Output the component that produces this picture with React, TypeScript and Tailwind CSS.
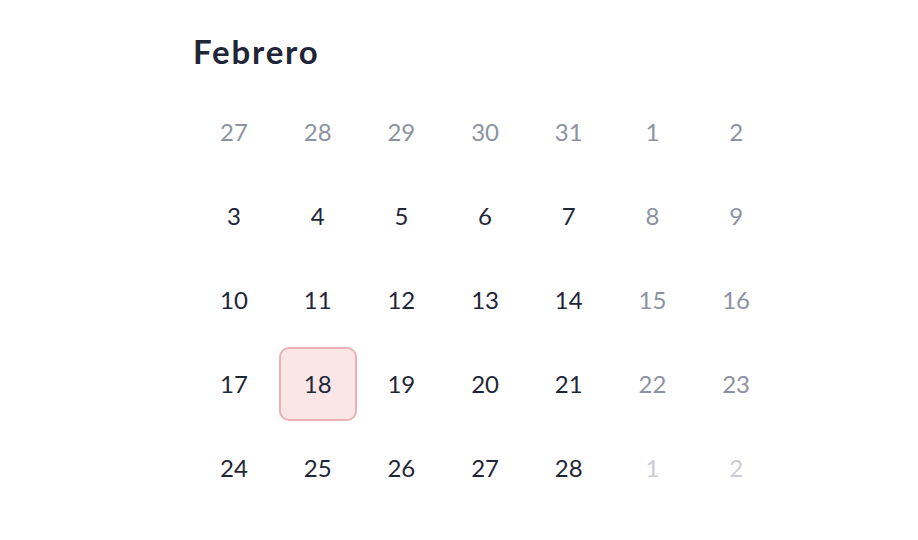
const weeks: { d: number; tone: "muted" | "main" | "faint" }[][] = [
  [27, 28, 29, 30, 31, 1, 2].map((d) => ({ d, tone: "muted" as const })),
  [3, 4, 5, 6, 7, 8, 9].map((d, i) => ({ d, tone: i > 4 ? ("muted" as const) : ("main" as const) })),
  [10, 11, 12, 13, 14, 15, 16].map((d, i) => ({ d, tone: i > 4 ? ("muted" as const) : ("main" as const) })),
  [17, 18, 19, 20, 21, 22, 23].map((d, i) => ({ d, tone: i > 4 ? ("muted" as const) : ("main" as const) })),
  [24, 25, 26, 27, 28, 1, 2].map((d, i) => ({ d, tone: i > 4 ? ("faint" as const) : ("main" as const) })),
];

const toneClass = {
  main: "text-[#1f2637]",
  muted: "text-[#8d92a0]",
  faint: "text-[#c9ccd4]",
};

export default function App() {
  return (
    <div
      className="w-[918px] h-[540px] bg-white pl-[195px] pt-[30px]"
      style={{ fontFamily: "Lato, 'Noto Sans', sans-serif" }}
    >
      {/* Month title */}
      <h2 className="text-[33px] font-bold text-[#1f2637] leading-[42px] -ml-[2px] tracking-[0.055em]">
        Febrero
      </h2>

      {/* Days grid */}
      <div className="grid grid-cols-[repeat(7,78px)] gap-x-[5.7px] gap-y-[10px] mt-[23px]">
        {weeks.flat().map((c, i) => {
          const selected = i === 22;
          return (
            <div
              key={i}
              className={`h-[74px] flex items-center justify-center text-[24px] rounded-[10px] ${
                selected ? "bg-[#fae6e6] border-2 border-[#ebb0b0]" : ""
              } ${toneClass[c.tone]}`}
            >
              {c.d}
            </div>
          );
        })}
      </div>
    </div>
  );
}
